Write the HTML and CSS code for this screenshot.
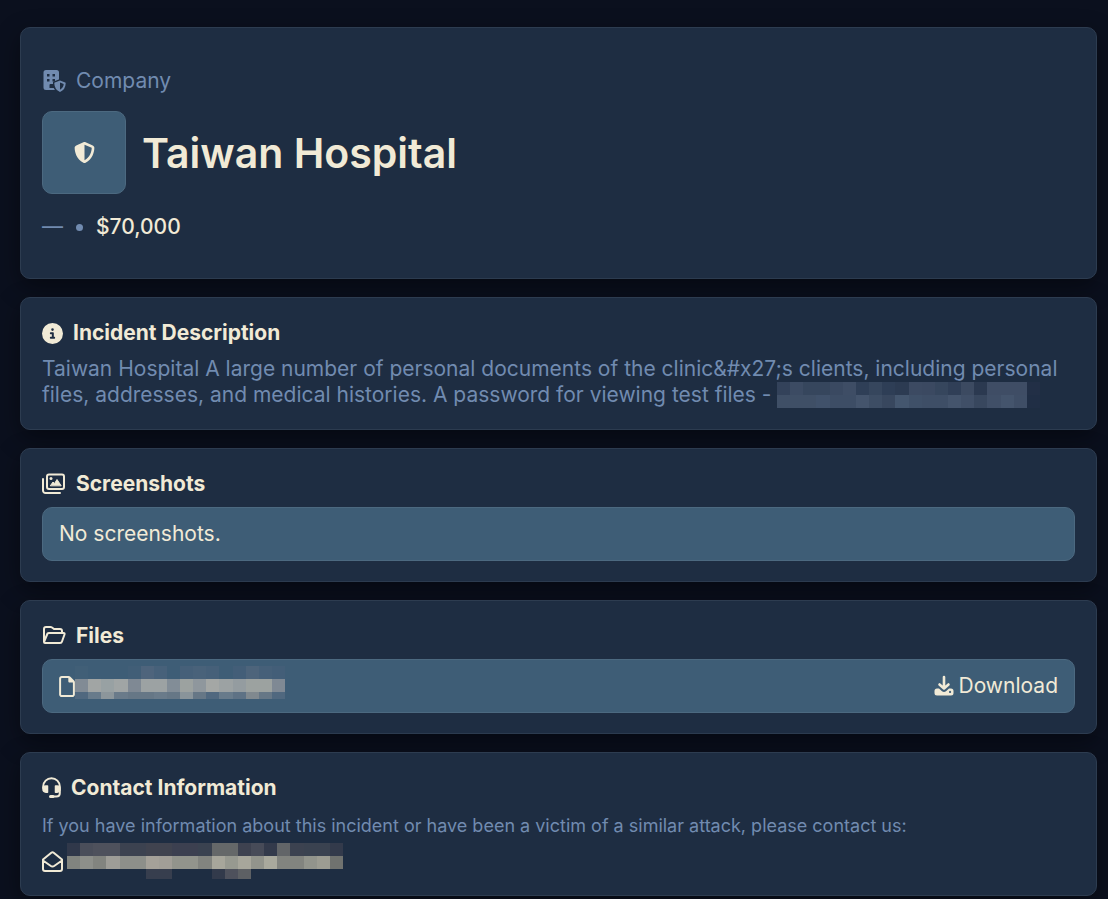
FILE: index.html
```html
<!DOCTYPE html>
<html lang="en">
<head>
<meta charset="utf-8">
<meta name="viewport" content="width=device-width, initial-scale=1">
<title>Taiwan Hospital</title>
<link rel="stylesheet" href="styles.css">
</head>
<body>
<main class="page">
  <section class="card hero">
    <div class="label">
      <svg class="icon-building" viewBox="0 0 24 24" fill="currentColor" aria-hidden="true"><path fill-rule="evenodd" d="M4 1H14.500a2.500 2.500 0 0 1 2.500 2.500V21H4A2.500 2.500 0 0 1 1.500 18.500v-15A2.500 2.500 0 0 1 4 1ZM5 5v2.500h2.500V5ZM10.500 5v2.500h2.500V5ZM5 10v2.500h2.500V10ZM10.500 10v2.500h2.500V10ZM7.500 16v3h5v-4h-4q-1 0-1 1Z"/><path class="cutout" d="M18 11.500 23.500 13.700Q24 20.500 18 23 12 20.500 12.500 13.700Z"/><path fill-rule="evenodd" d="M18 11.500 23.200 13.500q.5.200.5.800Q23.500 20.800 18 23 12.500 20.800 12.300 14.300q0-.6.5-.8ZM18 13.600v7.100q3.500-2 3.700-5.700Z"/></svg>
      <span>Company</span>
    </div>
    <div class="identity">
      <div class="avatar">
        <svg class="icon" viewBox="0 0 512 512" fill="currentColor" aria-hidden="true"><path d="M256 0c4.600 0 9.200 1 13.400 2.900L457.700 82.800c22 9.300 38.400 31 38.300 57.200c-.5 99.200-41.300 280.700-213.600 363.200c-16.700 8-36.100 8-52.800 0C57.300 420.700 16.500 239.200 16 140c-.1-26.200 16.300-47.900 38.300-57.200L242.700 2.900C246.800 1 251.400 0 256 0zm0 66.800V444.800C394 378 431.100 230.100 432 141.400L256 66.800z"/></svg>
      </div>
      <h1>Taiwan Hospital</h1>
    </div>
    <div class="meta"><span>—</span><span class="dot"></span><span class="amount">$70,000</span></div>
  </section>

  <section class="card">
    <h2>
      <svg class="icon" viewBox="0 0 512 512" fill="currentColor" aria-hidden="true"><path d="M256 512A256 256 0 1 0 256 0a256 256 0 1 0 0 512zM216 336h24V272H216c-13.300 0-24-10.700-24-24s10.700-24 24-24h48c13.300 0 24 10.700 24 24v88h8c13.300 0 24 10.700 24 24s-10.700 24-24 24H216c-13.300 0-24-10.700-24-24s10.700-24 24-24zm40-208a32 32 0 1 1 0 64 32 32 0 1 1 0-64z"/></svg>
      Incident Description
    </h2>
    <p class="description">Taiwan Hospital A large number of personal documents of the clinic&amp;#x27;s clients, including personal files, addresses, and medical histories. A password for viewing test files - <svg class="mosaic mosaic-password" data-height="2" data-rows="33425a 3c4b63 36465d 36465d 3a4961 3e4d65 2f3f57 36465d 2e3e56 2c3b52 3c4a62 3b4961 36465d 303f57 3c4a61 2b3950 3f4d65 3f4d65 3f4d65 222f46|3f4f66 3f4f66 3f4f66 40516a 3d4d65 3d4d65 44546c 3d4d64 38475e 44566e 3f5068 3e4e66 3e4e66 44546c 404f67 38475e 404f67 44546c 3f4e66 202e45"></svg></p>
  </section>

  <section class="card">
    <h2>
      <svg class="icon-wide" viewBox="0 0 24 22" fill="none" stroke="currentColor" stroke-width="2" stroke-linecap="round" stroke-linejoin="round" aria-hidden="true"><rect x="5" y="1.500" width="17" height="14.500" rx="2"/><path d="M1 6v11.500A2.500 2.500 0 0 0 3.500 20H18"/><circle cx="9" cy="5.500" r="1.500" fill="currentColor" stroke="none"/><path d="M8.500 12.500 11 9l1.500 1.500L15 6.500l4 6Z" fill="currentColor" stroke-width="1"/></svg>
      Screenshots
    </h2>
    <div class="row">No screenshots.</div>
  </section>

  <section class="card">
    <h2>
      <svg class="icon-wide" viewBox="0 0 24 22" fill="none" stroke="currentColor" stroke-width="2" stroke-linecap="round" stroke-linejoin="round" aria-hidden="true"><path d="M20 7V6a2 2 0 0 0-2-2h-6l-2-1.500Q9.300 2 8.500 2H4a2 2 0 0 0-2 2v13l3.500-8.500Q6 8 7 8h14.500q1.500 0 1 1.500l-2.500 7Q19.600 18 18 18H3q-1 0-1-1"/></svg>
      Files
    </h2>
    <div class="row">
      <span class="file">
        <svg class="icon-file" viewBox="0 0 384 512" fill="currentColor" aria-hidden="true"><path d="M320 464c8.800 0 16-7.200 16-16V160H256c-17.700 0-32-14.300-32-32V48H64c-8.800 0-16 7.200-16 16V448c0 8.800 7.200 16 16 16H320zM0 64C0 28.700 28.700 0 64 0H229.500c17 0 33.300 6.700 45.300 18.700l90.500 90.500c12 12 18.700 28.300 18.700 45.300V448c0 35.300-28.700 64-64 64H64c-35.300 0-64-28.700-64-64V64z"/></svg>
        <svg class="mosaic mosaic-file" data-height="2.5" data-rows="415f77 3e5d76 3e5d76 3e5d76 415e77 4e647c 47617a 3e5d76 466079 49627a 466079 3e5d76 435e78 4d647b 466079 435e78|818b95 a1a5a4 98a1a3 a0a5a5 7f8994 9ca2a3 9ca2a3 828d97 9ca2a0 8f979d a4a7a5 9ca2a3 949ca0 9ca2a0 9ca2a0 7f8994|50687f 687b8b 8c969b 6a7b8a 667786 667786 6a7b8a 667786 89949a 667786 50687f 687b8b 5e7285 80898f 667786 50687f"></svg>
      </span>
      <a class="download" href="#">
        <svg class="icon-download" viewBox="0 0 20 22" fill="none" stroke="currentColor" stroke-linecap="round" stroke-linejoin="round" aria-hidden="true"><path stroke-width="2.600" d="M10 2v11M5.500 9.500 10 13.500l4.500-4"/><path fill="currentColor" stroke="none" fill-rule="evenodd" d="M3 13.500h2l3 2.700q2 1.600 4 0l3-2.700h2q2.500 0 2.500 2.500v2q0 2.500-2.500 2.500H3Q.5 20.500.5 18v-2q0-2.500 2.500-2.500Zm13 2.300a1.100 1.100 0 1 0 .1 0Z"/></svg>
        Download
      </a>
    </div>
  </section>

  <section class="card">
    <h2>
      <svg class="icon-headset" viewBox="0 0 19 22" fill="none" stroke="currentColor" stroke-linecap="round" stroke-linejoin="round" aria-hidden="true"><path stroke-width="2" d="M1.200 11V9.500a8.300 8.300 0 0 1 16.600 0V16q0 3.500-3.500 3.500H10"/><path fill="currentColor" stroke-width="1.500" d="M5.500 9H4Q1 9 1 12t3 3.200h1.500ZM13.500 9H15q3 0 3 3t-3 3.200h-1.500Z"/><path stroke-width="3" d="M8.500 19.500H11"/></svg>
      Contact Information
    </h2>
    <p class="note">If you have information about this incident or have been a victim of a similar attack, please contact us:</p>
    <div class="mail">
      <svg class="icon" viewBox="0 0 21 21" fill="none" stroke="currentColor" stroke-width="2" stroke-linecap="round" stroke-linejoin="round" aria-hidden="true"><path d="M1 8.500 9.300 1.700q1.200-.9 2.400 0L20 8.500v9.500q0 2-2 2H3q-2 0-2-2ZM1 9.500l7.500 5.300q2 1.400 4 0L20 9.500"/></svg>
      <svg class="mosaic mosaic-mail" data-height="2.77" data-rows="30384a 4a4e5a 4e515c 4e515c 3c4250 3c4250 40434f 40434f 3c4050 3c4050 3a4250 656869 656869 3e4250 474b58 333a4b 626568 3c4250 3a4250 3a4250 333a4b|81847f 8d8f8a 82847f 9e9d97 8d8f8a 8d8f8a a5a199 a19e97 92948c 92948c 82847f a7a69b 979990 a7a69b 92948c a9a99d 82847f 82847f 92948c 9c9c92 70726f|1e2d42 1e2d42 1e2d42 1e2d42 1e2d42 1e2d42 373e4e 373e4e 1e2d42 1e2d42 1e2d42 323a4b 4e515c 5d6064 1e2d42 1e2d42 1e2d42 1e2d42 1e2d42 1e2d42 1e2d42"></svg>
    </div>
  </section>
</main>
<script src="mosaic.js"></script>
</body>
</html>
```
FILE: styles.css
```css
* { box-sizing: border-box; }

body {
  margin: 0;
  background: #0b101e;
  color: #f1ead6;
  font: 21px/26px Inter, "Liberation Sans", sans-serif;
}

.page {
  display: flex;
  flex-direction: column;
  gap: 18px;
  padding: 27px 11px 3px 20px;
}

.card {
  padding: 22px 21px 20px;
  background: #1e2d42;
  border: 1px solid #2d3c50;
  border-radius: 10px;
  box-shadow: 0 8px 24px rgba(0, 0, 0, 0.4);
}

.hero { padding: 40px 21px 38px; }

svg { flex: none; }

.icon { width: 21px; height: 21px; }
.icon-building { width: 24px; height: 24px; }
.icon-wide { width: 24px; height: 22px; }
.icon-file { width: 16px; height: 21px; }
.icon-download { width: 20px; height: 22px; }
.icon-headset { width: 19px; height: 22px; }

.cutout {
  fill: #1e2d42;
  stroke: #1e2d42;
  stroke-width: 3px;
}

.label {
  display: flex;
  align-items: center;
  gap: 10px;
  color: #718bb0;
}

.identity {
  display: flex;
  align-items: center;
  gap: 16px;
  margin: 17px 0 20px;
}

.avatar {
  display: grid;
  place-items: center;
  flex: none;
  width: 84px;
  height: 83px;
  background: #3e5d76;
  border: 1px solid #4c6980;
  border-radius: 10px;
}

h1 {
  margin: 0;
  font-size: 41px;
  line-height: 52px;
  font-weight: 600;
}

.meta {
  display: flex;
  align-items: center;
  gap: 13px;
  color: #718bb0;
}

.dot {
  width: 7px;
  height: 7px;
  border-radius: 50%;
  background: #718bb0;
}

.amount { color: #f1ead6; font-weight: 500; }

h2 {
  display: flex;
  align-items: center;
  gap: 10px;
  margin: 0 0 10px;
  font-size: 21px;
  line-height: 26px;
  font-weight: 700;
}

p { margin: 0; color: #718bb0; }

.description { padding-bottom: 1px; }

.row {
  display: flex;
  align-items: center;
  justify-content: space-between;
  padding: 13px 16px;
  background: #3e5d76;
  border: 1px solid #4c6980;
  border-radius: 10px;
}

.file { display: flex; align-items: center; height: 26px; }

.download {
  display: flex;
  align-items: center;
  gap: 5px;
  color: inherit;
  text-decoration: none;
}

.note { font-size: 18px; margin: 12px 0 8px; }

.mail { display: flex; align-items: center; gap: 4px; height: 28px; }

.mosaic-password { width: 263px; height: 26px; vertical-align: top; }
.mosaic-file { align-self: flex-end; width: 210px; height: 33px; }
.mosaic-mail { width: 276px; height: 36px; }
```
FILE: mosaic.js
```js
// Fills each redacted area with its grid of coloured cells.
document.querySelectorAll(".mosaic").forEach((svg) => {
  const rows = svg.dataset.rows.split("|").map((row) => row.split(" "));
  svg.setAttribute("viewBox", `0 0 ${rows[0].length} ${svg.dataset.height}`);
  svg.setAttribute("preserveAspectRatio", "none");
  svg.setAttribute("shape-rendering", "crispEdges");
  svg.setAttribute("role", "img");
  svg.setAttribute("aria-label", "Redacted");
  rows.forEach((row, y) => row.forEach((color, x) => {
    const cell = document.createElementNS("http://www.w3.org/2000/svg", "rect");
    cell.setAttribute("x", x);
    cell.setAttribute("y", y);
    cell.setAttribute("width", 1);
    cell.setAttribute("height", 1);
    cell.setAttribute("fill", `#${color}`);
    svg.append(cell);
  }));
});
```
